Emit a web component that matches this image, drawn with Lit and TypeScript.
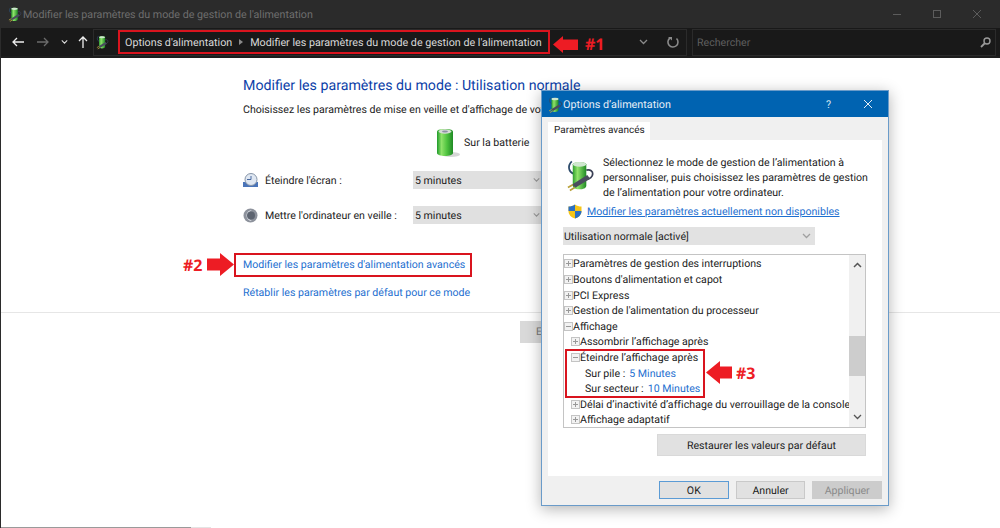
import { LitElement, html, css } from "lit";
import { customElement } from "lit/decorators.js";

const battery = (w: number, h: number) => html`<svg width=${w} height=${h} viewBox="0 0 24 30" aria-hidden="true">
  <defs><linearGradient id="bg" x1="0" x2="1" y1="0" y2="0"><stop offset="0" stop-color="#1f9a2a"/><stop offset=".28" stop-color="#8fe36a"/><stop offset=".62" stop-color="#4fc33f"/><stop offset="1" stop-color="#1f8a25"/></linearGradient></defs>
  <ellipse cx="15" cy="26.5" rx="9" ry="2.6" fill="#c4c4c4" opacity=".7"/>
  <path d="M1 4 C1 2 3 1 9 1 C15 1 17 2 17 4 V25 C17 29 1 29 1 25 Z" fill="url(#bg)"/>
  <ellipse cx="9" cy="3.5" rx="6.5" ry="2.2" fill="#d5dcd5"/>
  <ellipse cx="9" cy="3.5" rx="3" ry="1" fill="#8d8fa5"/>
</svg>`;

const plug = (w: number, h: number) => html`<svg width=${w} height=${h} viewBox="0 0 30 34" aria-hidden="true">
  <defs><linearGradient id="pg" x1="0" x2="1" y1="0" y2="0"><stop offset="0" stop-color="#2f9e2f"/><stop offset=".35" stop-color="#8fe36a"/><stop offset="1" stop-color="#1f8a25"/></linearGradient></defs>
  <path d="M6 3 C1 8 3 14 8 16" fill="none" stroke="#2c4a6a" stroke-width="1.8"/>
  <path d="M21 12 C30 10 30 21 20 22" fill="none" stroke="#3a3f55" stroke-width="1.8"/>
  <path d="M7 6 C7 3 21 3 21 6 V28 C21 33 7 33 7 28 Z" fill="url(#pg)"/>
  <ellipse cx="14" cy="6" rx="7" ry="2.4" fill="#cfe7cf"/>
  <path d="M6 27 L22 17 L25 21 L10 30 Z" fill="#4a4d5e"/>
  <path d="M2 30 L7 27 M4 33 L9 30" stroke="#b9a23c" stroke-width="1.8"/>
</svg>`;

const expand = (open: boolean) => html`<svg class="box" width="9" height="9" viewBox="0 0 9 9" aria-hidden="true">
  <rect x=".5" y=".5" width="8" height="8" fill="#f2f2f2" stroke="#c4c4c4"/>
  <path d=${open ? "M2 4.5H7" : "M2 4.5H7M4.5 2V7"} stroke="#999" fill="none"/>
</svg>`;

const chevron = (color: string, w = 9) => html`<svg width=${w} height="6" viewBox="0 0 9 6" aria-hidden="true"><path d="M1 1L4.5 4.5L8 1" fill="none" stroke=${color} stroke-width="1.3"/></svg>`;

const arrowSmall = html`<svg width="25" height="17" viewBox="0 0 25 17" aria-hidden="true"><path d="M0 8.5L10 0V3.5H25V14H10V17Z" fill="#ed1c24"/></svg>`;
const arrowRight = html`<svg width="27" height="23" viewBox="0 0 27 23" aria-hidden="true"><path d="M27 11.5L13 0V5.5H0V17.5H13V23Z" fill="#ed1c24"/></svg>`;
const arrowLeft = html`<svg width="26" height="23" viewBox="0 0 26 23" aria-hidden="true"><path d="M0 11.5L14 0V5.5H26V17.5H14V23Z" fill="#ed1c24"/></svg>`;

@customElement("app-root")
export class AppRoot extends LitElement {
  static styles = css`
    :host { display: block; position: relative; width: 1000px; height: 528px; overflow: hidden; background: #fff;
      font-family: Roboto, "Open Sans", sans-serif; font-size: 10.6px; color: #222; text-rendering: geometricPrecision; }
    * { box-sizing: border-box; }
    .win { display: flex; flex-direction: column; height: 528px; border-left: 1px solid #2b2b2b; }
    .title { height: 28px; background: #2b2b2b; display: flex; align-items: center; padding-left: 7px; color: #6e6e6e; gap: 1px; font-size: 10.7px; }
    .ctl { margin-left: auto; display: flex; align-items: center; gap: 30px; padding-right: 18px; }
    .tool { height: 30px; background: #191919; display: flex; align-items: center; border-bottom: 2px solid #1d1d1d; }
    .nav { width: 92px; display: flex; align-items: center; padding-left: 11px; }
    .nav svg { flex: none; }
    .addr { width: 594px; height: 27px; border: 1px solid #2b2b2b; display: flex; align-items: center; padding-left: 2px; color: #d8d8d8; font-size: 10.75px; }
    .crumb { margin-left: 16px; }
    .sep { margin: 0 7px 0 7px; width: 0; height: 0; border-left: 4px solid #8a8a8a; border-top: 3.5px solid transparent; border-bottom: 3.5px solid transparent; }
    .addr-end { margin-left: auto; display: flex; align-items: center; gap: 19px; padding-right: 7px; }
    .search { margin-left: 5px; width: 304px; height: 27px; border: 1px solid #2b2b2b; display: flex; align-items: center; justify-content: space-between; padding: 0 4px; color: #5f5f5f; }
    .body { flex: 1; display: flex; flex-direction: column; }
    .main { padding: 20px 0 0 242px; height: 255px; border-bottom: 1px solid #e6e6e6; }
    h1 { margin: 0; font-size: 14.2px; font-weight: 400; color: #0d3fa8; line-height: 17px; white-space: nowrap; }
    .sub { margin-top: 8px; line-height: 14px; white-space: nowrap; }
    .bat { margin: 9px 0 0 193px; display: flex; align-items: center; gap: 4px; height: 33px; }
    .row { display: flex; align-items: center; height: 18px; margin-top: 12px; }
    .row + .row { margin-top: 17px; }
    .row svg { flex: none; }
    .row span { margin-left: 7px; width: 148px; white-space: nowrap; }
    .sel { width: 135px; height: 18px; background: #e0e0e0; padding: 0 8px 0 2px; display: flex; align-items: center; justify-content: space-between; }
    .link { color: #1e6fd0; white-space: nowrap; line-height: 14px; }
    .l1 { margin-top: 34px; }
    .l2 { margin-top: 14px; }
    .foot { flex: 1; padding: 8px 0 0 519px; }
    .ebtn { width: 40px; height: 22px; background: #d9d9d9; padding-left: 16px; line-height: 22px; color: #777; }
    .edge { height: 1px; background: linear-gradient(90deg, #9a9a9a 0 190px, #e4e4e4 190px 210px, #fff 210px); }

    .dlg { position: absolute; left: 541px; top: 90px; width: 348px; height: 416px; background: #f0f0f0; border: 1px solid #6a9bc9;
      box-shadow: 0 3px 14px rgba(0,0,0,.3); display: flex; flex-direction: column; }
    .dtitle { height: 26px; background: #0063b1; color: #e6eef6; display: flex; align-items: center; padding-left: 6px; gap: 0; flex: none; font-size: 10.8px; }
    .dctl { margin-left: auto; display: flex; align-items: center; gap: 32px; padding-right: 15px; color: #dbe7f2; }
    .dbody { padding: 5px 6px 0 6px; }
    .tab { width: 102px; height: 18px; background: #fff; padding-left: 6px; line-height: 17px; font-size: 10px; }
    .panel { background: #fff; height: 336px; padding: 15px 15px 0 15px; }
    .intro { display: flex; gap: 8px; padding-left: 3px; }
    .intro p { margin: 0; line-height: 15px; white-space: nowrap; }
    .intro svg { flex: none; margin-top: 3px; }
    .shield { display: flex; align-items: center; gap: 5px; padding-left: 5px; margin-top: 3px; height: 16px; }
    .shield a { color: #1e6fd0; text-decoration: underline; white-space: nowrap; }
    .dsel { margin-top: 8px; width: 252px; height: 18px; background: #e2e2e2; padding: 0 4px 0 1px; display: flex; align-items: center; justify-content: space-between; }
    .list { margin-top: 9px; width: 303px; height: 174px; border: 1px solid #c4c4c4; display: flex; padding-top: 1px; }
    .items { flex: 1; min-width: 0; }
    .it { height: 15.62px; display: flex; align-items: center; white-space: nowrap; }
    .it .box { flex: none; }
    .i1 { padding-left: 7px; }
    .i2 { padding-left: 21px; }
    .wide { letter-spacing: .03px; }
    .v { color: #1e6fd0; margin-left: 4px; }
    .sb { width: 16px; flex: none; margin-top: -1px; background: #f0f0f0; display: flex; flex-direction: column; align-items: center; padding: 7px 0; }
    .thumb { width: 16px; height: 40px; background: #cdcdcd; margin-top: 68px; }
    .sb .dn { margin-top: auto; display: flex; }
    .restore { margin: 6px 0 0 94px; width: 209px; height: 22px; background: #e1e1e1; border: 1px solid #d9d9d9; display: flex; align-items: center; justify-content: center; }
    .acts { display: flex; gap: 7px; padding: 5px 0 0 111px; }
    .b { width: 70px; height: 18px; background: #e1e1e1; border: 1px solid #c9c9c9; display: flex; align-items: center; justify-content: center; }
    .ok { border-color: #5b9bd5; }
    .off { background: #ccc; border-color: #ccc; color: #8a8a8a; }

    .mark { position: absolute; border: 2px solid #d9141e; }
    .m1 { left: 118px; top: 30px; width: 432px; height: 24px; }
    .m2 { left: 234px; top: 253px; width: 238px; height: 24px; }
    .m3 { left: 565px; top: 349px; width: 140px; height: 49px; }
    .mk { position: absolute; display: flex; align-items: center; gap: 7px; }
    .k1 { left: 553px; top: 35px; }
    .k2 { left: 183px; top: 253px; gap: 5px; }
    .k3 { left: 706px; top: 361px; gap: 4px; }
    .num { color: #ed1c24; font-weight: 700; font-size: 16px; line-height: 18px; font-family: "Open Sans", sans-serif; }
    .gap13 { margin-left: 13px; }
    .gap12 { margin-left: 12px; display: flex; }
    .gap10 { margin-left: 10px; }
  `;

  render() {
    return html`
      <div class="win">
        <div class="title">${plug(14, 16)}<span>Modifier les paramètres du mode de gestion de l'alimentation</span>
          <div class="ctl">
            <svg width="10" height="10" viewBox="0 0 10 10" aria-hidden="true"><path d="M1 5.5H9" stroke="#5c5c5c"/></svg>
            <svg width="10" height="10" viewBox="0 0 10 10" aria-hidden="true"><rect x="1.5" y="1.5" width="7" height="7" fill="none" stroke="#5c5c5c"/></svg>
            <svg width="10" height="10" viewBox="0 0 10 10" aria-hidden="true"><path d="M1 1L9 9M9 1L1 9" stroke="#5c5c5c"/></svg>
          </div>
        </div>
        <div class="tool">
          <div class="nav">
            <svg width="12" height="10" viewBox="0 0 12 10" aria-hidden="true"><path d="M12 5H1M5 1L1 5L5 9" fill="none" stroke="#eee" stroke-width="1.3"/></svg>
            <svg class="gap13" width="12" height="10" viewBox="0 0 12 10" aria-hidden="true"><path d="M0 5H11M7 1L11 5L7 9" fill="none" stroke="#6b6b6b" stroke-width="1.3"/></svg>
            <span class="gap12">${chevron("#ddd", 7)}</span>
            <svg class="gap10" width="10" height="12" viewBox="0 0 10 12" aria-hidden="true"><path d="M5 12V1M1 5L5 1L9 5" fill="none" stroke="#eee" stroke-width="1.3"/></svg>
          </div>
          <div class="addr">${plug(13, 16)}
            <span class="crumb">Options d'alimentation</span><i class="sep"></i><span>Modifier les paramètres du mode de gestion de l'alimentation</span>
            <div class="addr-end">${chevron("#8a8a8a")}
              <svg width="12" height="12" viewBox="0 0 12 12" aria-hidden="true"><path d="M9.5 2.5A5 5 0 1 1 3 2" fill="none" stroke="#8a8a8a" stroke-width="1.6"/><path d="M1 1H5V4.5Z" fill="#8a8a8a"/></svg>
            </div>
          </div>
          <div class="search"><span>Rechercher</span>
            <svg width="11" height="11" viewBox="0 0 11 11" aria-hidden="true"><circle cx="7" cy="4" r="3" fill="none" stroke="#9a9a9a" stroke-width="1.4"/><path d="M5 6L1 10" stroke="#9a9a9a" stroke-width="1.8"/></svg>
          </div>
        </div>
        <div class="body">
          <div class="main">
            <h1>Modifier les paramètres du mode : Utilisation normale</h1>
            <div class="sub">Choisissez les paramètres de mise en veille et d'affichage de votre ordinateur.</div>
            <div class="bat">${battery(24, 30)}<span>Sur la batterie</span></div>
            <div class="row">
              <svg width="15" height="15" viewBox="0 0 15 15" aria-hidden="true"><rect x="0" y="9" width="15" height="5" fill="#4a74b8"/><circle cx="8" cy="6.5" r="6" fill="#dfe7f2" stroke="#8795a8"/><path d="M8 3V6.5H4" fill="none" stroke="#4a6aa0"/></svg>
              <span>Éteindre l'écran :</span><div class="sel">5 minutes${chevron("#999", 7)}</div>
            </div>
            <div class="row">
              <svg width="15" height="15" viewBox="0 0 15 15" aria-hidden="true"><circle cx="7.5" cy="7.5" r="7" fill="#8d929c"/><path d="M9 2A6 6 0 0 0 9 13A5 5 0 0 1 9 2Z" fill="#dfe3ea"/><circle cx="8" cy="7.5" r="4" fill="#5d6470"/></svg>
              <span>Mettre l'ordinateur en veille :</span><div class="sel">5 minutes${chevron("#999", 7)}</div>
            </div>
            <div class="link l1">Modifier les paramètres d'alimentation avancés</div>
            <div class="link l2">Rétablir les paramètres par défaut pour ce mode</div>
          </div>
          <div class="foot"><div class="ebtn">E</div></div>
          <div class="edge"></div>
        </div>
      </div>

      <div class="dlg">
        <div class="dtitle">${plug(15, 17)}<span>Options d’alimentation</span>
          <div class="dctl"><span>?</span>
            <svg width="10" height="10" viewBox="0 0 10 10" aria-hidden="true"><path d="M1 1L9 9M9 1L1 9" stroke="#e6eef6"/></svg>
          </div>
        </div>
        <div class="dbody">
          <div class="tab">Paramètres avancés</div>
          <div class="panel">
            <div class="intro">${plug(29, 34)}
              <p>Sélectionnez le mode de gestion de l’alimentation à<br>personnaliser, puis choisissez les paramètres de gestion<br>de l’alimentation pour votre ordinateur.</p>
            </div>
            <div class="shield">
              <svg width="14" height="15" viewBox="0 0 14 15" aria-hidden="true"><path d="M7 0.5C5 2 3 2.5 0.5 2.5V7C0.5 11 3.5 13.5 7 14.5C10.5 13.5 13.5 11 13.5 7V2.5C11 2.5 9 2 7 0.5Z" fill="#f5c518"/><path d="M7 0.5C5 2 3 2.5 0.5 2.5V7H7ZM7 7V14.5C10.5 13.5 13.5 11 13.5 7Z" fill="#2a6fc4"/></svg>
              <a>Modifier les paramètres actuellement non disponibles</a>
            </div>
            <div class="dsel"><span>Utilisation normale [activé]</span>${chevron("#a0a0a0")}</div>
            <div class="list">
              <div class="items">
                <div class="it">${expand(false)}Paramètres de gestion des interruptions</div>
                <div class="it">${expand(false)}Boutons d'alimentation et capot</div>
                <div class="it">${expand(false)}PCI Express</div>
                <div class="it">${expand(false)}Gestion de l'alimentation du processeur</div>
                <div class="it">${expand(true)}Affichage</div>
                <div class="it i1">${expand(false)}Assombrir l’affichage après</div>
                <div class="it i1">${expand(true)}Éteindre l’affichage après</div>
                <div class="it i2">Sur pile :<span class="v">5 Minutes</span></div>
                <div class="it i2">Sur secteur :<span class="v">10 Minutes</span></div>
                <div class="it i1 wide">${expand(false)}Délai d’inactivité d’affichage du verrouillage de la console</div>
                <div class="it i1">${expand(false)}Affichage adaptatif</div>
              </div>
              <div class="sb">
                <svg width="9" height="6" viewBox="0 0 9 6" aria-hidden="true"><path d="M1 5L4.5 1.5L8 5" fill="none" stroke="#555" stroke-width="1.5"/></svg>
                <div class="thumb"></div>
                <span class="dn">${chevron("#555")}</span>
              </div>
            </div>
            <div class="restore">Restaurer les valeurs par défaut</div>
          </div>
          <div class="acts">
            <div class="b ok">OK</div><div class="b">Annuler</div><div class="b off">Appliquer</div>
          </div>
        </div>
      </div>

      <div class="mark m1"></div>
      <div class="mk k1">${arrowSmall}<span class="num">#1</span></div>
      <div class="mark m2"></div>
      <div class="mk k2"><span class="num">#2</span>${arrowRight}</div>
      <div class="mark m3"></div>
      <div class="mk k3">${arrowLeft}<span class="num">#3</span></div>
    `;
  }
}
